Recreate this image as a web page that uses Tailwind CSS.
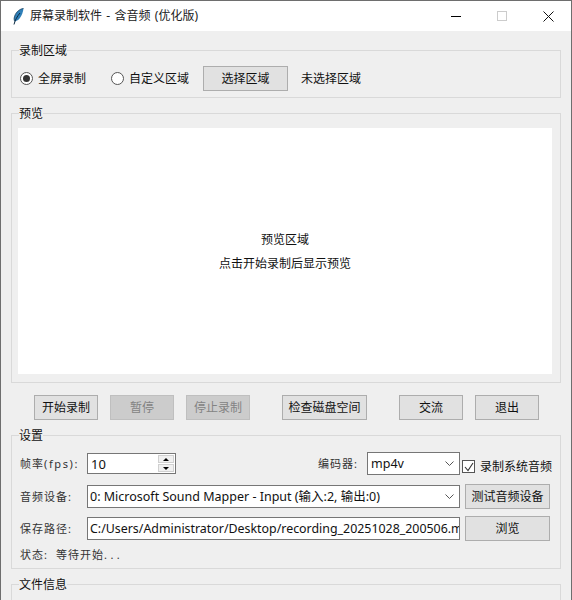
<!DOCTYPE html>
<html lang="zh-CN">
<head>
    <meta charset="UTF-8">
    <title>屏幕录制软件 - 含音频 (优化版)</title>
    <script src="https://cdn.jsdelivr.net/npm/@tailwindcss/browser@4"></script>
</head>
<body class="w-[572px] h-[600px] overflow-hidden bg-[#f0f0f0] text-[12px] leading-[16px] text-[#111] font-['Noto_Sans','Noto_Sans_CJK_SC',sans-serif]">
    <div class="h-[600px] overflow-hidden border-t border-x border-[#6e6e6e] bg-[#efefef]">
        <!-- title bar -->
        <div class="h-[30px] bg-white flex items-center pl-[12px]">
            <svg class="w-[11px] h-[17px]" viewBox="0 0 11 17">
                <path d="M10.5 0.5C6 1 2 5 1.2 10C1 11.5 1.3 12.8 1.9 13.4C6.5 12.5 9.5 7 10.5 0.5Z" fill="#2f7fb8"/>
                <path d="M10.5 0.5C6 1 2 5 1.2 10C1 11.5 1.3 12.8 1.9 13.4" stroke="#123a58" stroke-width="0.8" fill="none"/>
                <path d="M7 5C4.5 8 2 12 1 16.5" stroke="#0d2a40" stroke-width="1" fill="none"/>
            </svg>
            <span class="ml-[6px] text-[#222] whitespace-pre [word-spacing:1.2px]">屏幕录制软件 - 含音频 (优化版)</span>
            <div class="ml-auto flex items-center">
                <div class="w-[46px] flex justify-center"><div class="w-[10px] h-px bg-black"></div></div>
                <div class="w-[46px] flex justify-center"><div class="w-[10px] h-[10px] border border-[#cccccc]"></div></div>
                <div class="w-[46px] flex justify-center">
                    <svg class="w-[11px] h-[11px]" viewBox="0 0 11 11"><path d="M0.5 0.5L10.5 10.5M10.5 0.5L0.5 10.5" stroke="#111" stroke-width="1"/></svg>
                </div>
            </div>
        </div>

        <div class="px-[10px]">
            <!-- record area -->
            <div class="relative mt-[19px] h-[48px] border border-[#d9d9d9] flex items-center pl-[8px] pt-[9px]">
                <span class="absolute left-[7px] top-[-8px] bg-[#efefef]">录制区域</span>
                <div class="w-[13px] h-[13px] rounded-full border border-[#555] bg-white flex items-center justify-center"><div class="w-[7px] h-[7px] rounded-full bg-[#333]"></div></div>
                <span class="ml-[5px]">全屏录制</span>
                <div class="ml-[25px] w-[13px] h-[13px] rounded-full border border-[#555] bg-white"></div>
                <span class="ml-[5px]">自定义区域</span>
                <button class="ml-[14px] w-[85px] h-[25px] bg-[#e1e1e1] border border-[#adadad]">选择区域</button>
                <span class="ml-[13px]">未选择区域</span>
            </div>

            <!-- preview -->
            <div class="relative mt-[15px] h-[270px] border border-[#d9d9d9] pl-[6px] pr-[8px] pt-[14px]">
                <span class="absolute left-[7px] top-[-8px] bg-[#efefef]">预览</span>
                <div class="h-[246px] bg-white flex flex-col items-center justify-center gap-[8px] pt-[2px]">
                    <p>预览区域</p>
                    <p>点击开始录制后显示预览</p>
                </div>
            </div>

            <!-- actions -->
            <div class="flex mt-[12px] pl-[23px]">
                <button class="w-[64px] h-[25px] bg-[#e1e1e1] border border-[#adadad]">开始录制</button>
                <button class="ml-[12px] w-[64px] h-[25px] bg-[#cccccc] border border-[#bfbfbf] text-[#838383]">暂停</button>
                <button class="ml-[12px] w-[64px] h-[25px] bg-[#cccccc] border border-[#bfbfbf] text-[#838383]">停止录制</button>
                <button class="ml-[32px] w-[85px] h-[25px] bg-[#e1e1e1] border border-[#adadad]">检查磁盘空间</button>
                <button class="ml-[32px] w-[64px] h-[25px] bg-[#e1e1e1] border border-[#adadad]">交流</button>
                <button class="ml-[12px] w-[64px] h-[25px] bg-[#e1e1e1] border border-[#adadad]">退出</button>
            </div>

            <!-- settings -->
            <div class="relative mt-[15px] h-[134px] border border-[#d9d9d9] pl-[8px] pt-[17px]">
                <span class="absolute left-[7px] top-[-8px] bg-[#efefef]">设置</span>
                <div class="flex items-start h-[31px]">
                    <span class="w-[67px] mt-[3px] text-[#333] tracking-[1px] text-[11px]">帧率<span class="tracking-[1.6px]">(fps)</span>:</span>
                    <div class="w-[89px] h-[21px] bg-white border border-[#767676] flex items-center pl-[3px] text-[13px]">
                        <span>10</span>
                        <div class="ml-auto w-[16px] mr-[1px] flex flex-col gap-[1px]">
                            <div class="h-[8px] bg-[#f0f0f0] border border-[#d0d0d0] flex items-center justify-center"><div class="w-0 h-0 border-x-[3px] border-x-transparent border-b-[3px] border-b-black"></div></div>
                            <div class="h-[8px] bg-[#f0f0f0] border border-[#d0d0d0] flex items-center justify-center"><div class="w-0 h-0 border-x-[3px] border-x-transparent border-t-[3px] border-t-black"></div></div>
                        </div>
                    </div>
                    <span class="ml-[142px] w-[49px] mt-[3px] text-[#333] text-[11px] tracking-[1px]">编码器:</span>
                    <div class="w-[93px] h-[23px] -mt-[1px] bg-white border border-[#767676] flex items-center pl-[3px] pr-[5px] text-[12.5px]">
                        <span>mp4v</span>
                        <svg class="ml-auto w-[9px] h-[5px]" viewBox="0 0 9 5"><path d="M0.5 0.5L4.5 4.5L8.5 0.5" stroke="#555" fill="none"/></svg>
                    </div>
                    <div class="ml-[2px] mt-[7px] w-[13px] h-[13px] bg-white border border-[#555] flex items-center justify-center">
                        <svg class="w-[10px] h-[10px]" viewBox="0 0 10 10"><path d="M1 5L4 8.5L9 1" stroke="#333" stroke-width="1.1" fill="none"/></svg>
                    </div>
                    <span class="ml-[5px] mt-[6px]">录制系统音频</span>
                </div>
                <div class="flex items-center h-[25px]">
                    <span class="w-[67px] text-[#333] text-[11px] tracking-[1px]">音频设备:</span>
                    <div class="w-[373px] h-[23px] bg-white border border-[#767676] flex items-center pl-[2px] pr-[5px] text-[12.5px] whitespace-nowrap">
                        <span>0: Microsoft Sound Mapper - Input (输入:2, 输出:0)</span>
                        <svg class="ml-auto w-[9px] h-[5px]" viewBox="0 0 9 5"><path d="M0.5 0.5L4.5 4.5L8.5 0.5" stroke="#555" fill="none"/></svg>
                    </div>
                    <button class="ml-[5px] w-[85px] h-[25px] bg-[#e1e1e1] border border-[#adadad]">测试音频设备</button>
                </div>
                <div class="flex items-center h-[25px] mt-[7px]">
                    <span class="w-[67px] text-[#333] text-[11px] tracking-[1px]">保存路径:</span>
                    <div class="w-[373px] h-[23px] bg-white border border-[#767676] flex items-center pl-[2px] text-[12.4px] whitespace-nowrap overflow-hidden">C:/Users/Administrator/Desktop/recording_20251028_200506.mp4</div>
                    <button class="ml-[5px] w-[85px] h-[25px] bg-[#e1e1e1] border border-[#adadad]">浏览</button>
                </div>
                <p class="mt-[6px] text-[#333] text-[11px] tracking-[1px]">状态:<span class="ml-[8px]">等待开始</span><span class="tracking-[3.5px]">...</span></p>
            </div>

            <!-- file info -->
            <div class="relative mt-[15px] h-[60px] border border-[#d9d9d9]">
                <span class="absolute left-[7px] top-[-8px] bg-[#efefef]">文件信息</span>
            </div>
        </div>
    </div>
</body>
</html>
